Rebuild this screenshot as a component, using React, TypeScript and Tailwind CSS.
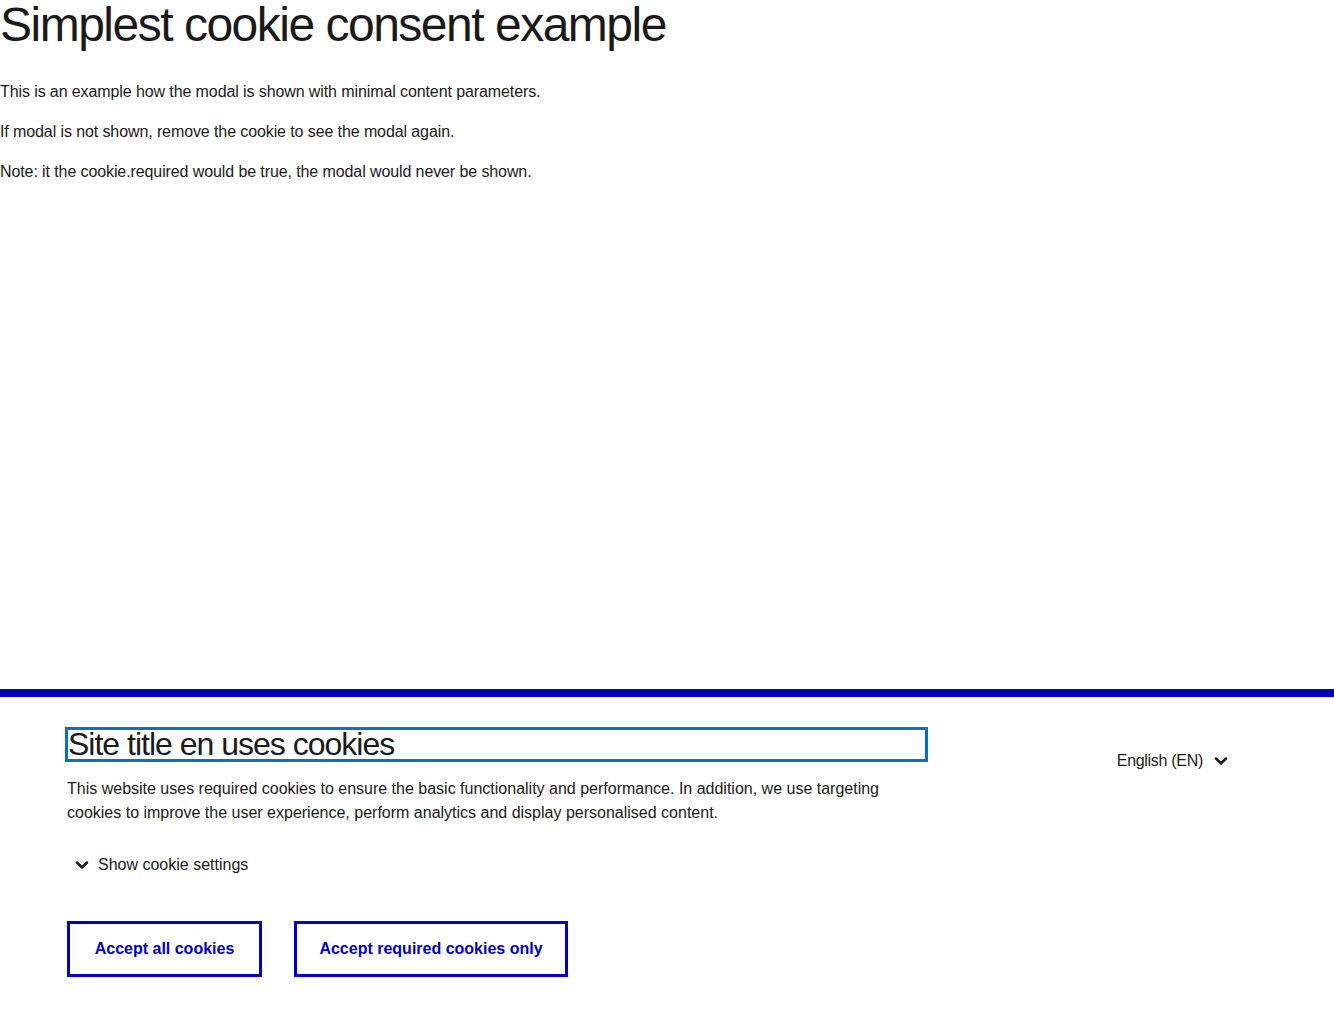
import { ChevronDown } from "lucide-react";

const FONT = "font-['Liberation_Sans',Arial,sans-serif]";

export default function App() {
    return (
        <div className={`min-h-screen flex flex-col bg-white text-[#1a1a1a] ${FONT}`}>
            <main>
                <h1 className="text-[48px] leading-[50px] tracking-[-1.5px] font-normal">Simplest cookie consent example</h1>
                <div className="mt-[30px] flex flex-col gap-4 text-[16px] leading-6 tracking-[-0.1px]">
                    <p>This is an example how the modal is shown with minimal content parameters.</p>
                    <p>If modal is not shown, remove the cookie to see the modal again.</p>
                    <p>Note: it the cookie.required would be true, the modal would never be shown.</p>
                </div>
            </main>

            <section className="mt-auto border-t-8 border-[#0000bf] bg-white">
                <div className="pl-[67px] pr-[104px] pt-[30px] pb-[32px]">
                    <div className="flex items-start justify-between">
                        <div className="w-[861px]">
                            <h2 className="-ml-[2px] border-[3px] border-[#0072c6] text-[32px] leading-[29px] tracking-[-1px] font-normal">
                                Site title en uses cookies
                            </h2>
                            <p className="mt-[15px] max-w-[830px] text-[16px] leading-6">
                                This website uses required cookies to ensure the basic functionality and performance. In addition, we use targeting cookies to improve the user experience, perform analytics and display personalised content.
                            </p>
                        </div>
                        <button className="mt-[22px] mr-[-1px] flex items-center gap-[8px] text-[16px] leading-6 tracking-[-0.3px]">
                            English (EN)
                            <ChevronDown size={20} strokeWidth={3} />
                        </button>
                    </div>

                    <button className="mt-[28px] ml-[5px] flex items-center gap-[6px] text-[16px] leading-6">
                        <ChevronDown size={20} strokeWidth={3} />
                        Show cookie settings
                    </button>

                    <div className="mt-[44px] flex gap-8">
                        <button className="h-14 w-[195px] border-[3px] border-[#0000bf] text-[16px] font-bold text-[#0000bf]">
                            Accept all cookies
                        </button>
                        <button className="h-14 w-[274px] border-[3px] border-[#0000bf] text-[16px] font-bold text-[#0000bf]">
                            Accept required cookies only
                        </button>
                    </div>
                </div>
            </section>
        </div>
    );
}
